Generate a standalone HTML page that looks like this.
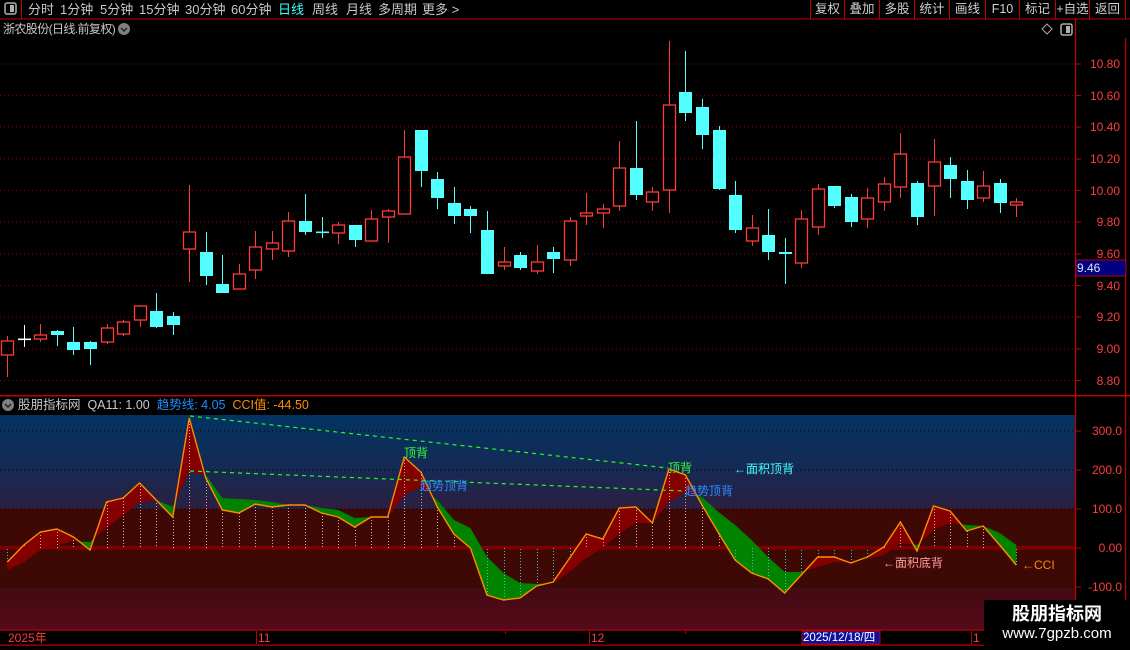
<!DOCTYPE html>
<html><head><meta charset="utf-8"><style>
*{margin:0;padding:0;box-sizing:border-box}
body{width:1130px;height:650px;background:#000;overflow:hidden;position:relative;font-family:"Liberation Sans","Noto Sans CJK SC",sans-serif;color:#c8c8c8}
.t{position:absolute;white-space:nowrap;font-size:13px;line-height:16px}
.bt{position:absolute;top:0;height:19px;border-left:1px solid #c00000;font-size:12.5px;line-height:19px;text-align:center;color:#d0d0d0;white-space:nowrap;overflow:hidden}
svg{position:absolute;left:0;top:0}
</style></head><body>
<svg width="1130" height="650" id="s">
<defs>
<linearGradient id="gb" x1="0" y1="0" x2="0" y2="1"><stop offset="0" stop-color="#033363"/><stop offset="0.55" stop-color="#152a55"/><stop offset="1" stop-color="#2c1f40"/></linearGradient>
<linearGradient id="gr" x1="0" y1="0" x2="0" y2="1"><stop offset="0" stop-color="#430a12"/><stop offset="1" stop-color="#540a1a"/></linearGradient>
</defs>
<rect x="0" y="18.5" width="1130" height="1" fill="#c00000"/>
<rect x="21" y="0" width="1" height="19" fill="#c00000"/>
<rect x="5" y="3" width="11" height="11" rx="2" fill="none" stroke="#b0b0b0" stroke-width="1.5"/><rect x="10" y="5" width="4" height="7" fill="#b0b0b0"/>
<rect x="1075" y="19" width="1.2" height="626" fill="#c00000"/>
<rect x="1125" y="38" width="1.2" height="592" fill="#c00000"/>
<rect x="0" y="395" width="1130" height="1.5" fill="#c00000"/>
<rect x="0" y="415" width="1075" height="94" fill="url(#gb)"/>
<rect x="0" y="509" width="1075" height="78" fill="#3e0904"/>
<rect x="0" y="546" width="1075" height="3.5" fill="#800000"/>
<rect x="0" y="587" width="1075" height="43" fill="url(#gr)"/>
<g id="grid" stroke="#8a0000" stroke-width="1" stroke-dasharray="1 3"></g>
<g id="ind"></g>
<g id="cd"></g>
<rect x="0" y="629.5" width="1130" height="1.2" fill="#c00000"/>
<rect x="0" y="644.5" width="1130" height="1.2" fill="#c00000"/>
<rect x="256" y="631" width="1" height="13" fill="#c00000"/>
<rect x="589" y="631" width="1" height="13" fill="#c00000"/>
<rect x="971" y="631" width="1" height="13" fill="#c00000"/>
<rect x="505" y="631" width="1" height="3" fill="#c00000"/>
<rect x="685" y="631" width="1" height="3" fill="#c00000"/>
<rect x="802" y="631" width="78" height="13" fill="#1010a0" stroke="#c00000" stroke-width="1"/>
<circle cx="124" cy="29" r="6" fill="#808080"/><path d="M121 28 L124 31 L127 28" stroke="#222" stroke-width="1.5" fill="none"/>
<circle cx="8" cy="405" r="6" fill="#808080"/><path d="M5 404 L8 407 L11 404" stroke="#222" stroke-width="1.5" fill="none"/>
<path d="M1047 24 L1052 29 L1047 34 L1042 29 Z" fill="none" stroke="#aaa"/>
<rect x="1061" y="24" width="11" height="11" rx="2" fill="none" stroke="#b0b0b0" stroke-width="1.5"/><rect x="1066" y="26" width="4" height="7" fill="#b0b0b0"/>
<rect x="1076" y="260" width="50" height="16" fill="#000080" stroke="#c00000"/>
</svg>

<div class="t" style="left:28px;top:2px">分时</div>
<div class="t" style="left:60px;top:2px">1分钟</div>
<div class="t" style="left:100px;top:2px">5分钟</div>
<div class="t" style="left:139px;top:2px">15分钟</div>
<div class="t" style="left:185px;top:2px">30分钟</div>
<div class="t" style="left:231px;top:2px">60分钟</div>
<div class="t" style="left:278px;top:2px;color:#40ffff">日线</div>
<div class="t" style="left:312px;top:2px">周线</div>
<div class="t" style="left:346px;top:2px">月线</div>
<div class="t" style="left:378px;top:2px">多周期</div>
<div class="t" style="left:422px;top:2px">更多 &gt;</div>
<div class="bt" style="left:810px;width:34px">复权</div>
<div class="bt" style="left:844px;width:35px">叠加</div>
<div class="bt" style="left:879px;width:35px">多股</div>
<div class="bt" style="left:914px;width:35px">统计</div>
<div class="bt" style="left:949px;width:36px">画线</div>
<div class="bt" style="left:985px;width:34px">F10</div>
<div class="bt" style="left:1019px;width:36px">标记</div>
<div class="bt" style="left:1055px;width:34px">+自选</div>
<div class="bt" style="left:1089px;width:37px;border-right:1px solid #c00000">返回</div>

<div class="t" style="left:3px;top:21px;font-size:12px;letter-spacing:-0.6px">浙农股份(日线.前复权)</div>
<div class="t" style="left:18px;top:397px;font-size:12.5px">股朋指标网&nbsp; QA11: 1.00 &nbsp;<span style="color:#1e8cff">趋势线: 4.05</span>&nbsp; <span style="color:#ff8c00">CCI值: -44.50</span></div>

<div class="t" style="left:1077px;top:260px;color:#e0e0ff;font-size:12px">9.46</div>

<div class="t" style="left:404px;top:445px;color:#30ff30;font-size:12px">顶背</div>
<div class="t" style="left:420px;top:478px;color:#2a8cff;font-size:12px">趋势顶背</div>
<div class="t" style="left:668px;top:460px;color:#30ff30;font-size:12px">顶背</div>
<div class="t" style="left:685px;top:483px;color:#2a8cff;font-size:12px">趋势顶背</div>
<div class="t" style="left:734px;top:461px;color:#40ffff;font-size:12px">←面积顶背</div>
<div class="t" style="left:883px;top:555px;color:#ff9c9c;font-size:12px">←面积底背</div>
<div class="t" style="left:1022px;top:557px;color:#ff8c00;font-size:12px">←CCI</div>

<div class="t" style="left:8px;top:630px;color:#ff3c3c;font-size:12px">2025年</div>
<div class="t" style="left:258px;top:630px;color:#ff3c3c;font-size:12px">11</div>
<div class="t" style="left:591px;top:630px;color:#ff3c3c;font-size:12px">12</div>
<div class="t" style="left:803px;top:630px;color:#fff;font-size:11.5px">2025/12/18/四</div>
<div class="t" style="left:973px;top:630px;color:#ff3c3c;font-size:12px">1</div>

<div style="position:absolute;left:984px;top:600px;width:146px;height:50px;background:#000">
<div style="position:absolute;left:0;width:146px;top:2px;text-align:center;color:#fff;font-size:18px;font-weight:bold;line-height:24px">股朋指标网</div>
<div style="position:absolute;left:0;width:146px;top:24px;text-align:center;color:#fff;font-size:15px;line-height:20px">www.7gpzb.com</div>
</div>

<div id="lbl"></div>
<script>
var NS="http://www.w3.org/2000/svg";
function el(p,tag,a){var e=document.createElementNS(NS,tag);for(var k in a)e.setAttribute(k,a[k]);p.appendChild(e);return e;}
var grid=document.getElementById('grid'),ind=document.getElementById('ind'),cd=document.getElementById('cd'),lbl=document.getElementById('lbl');
var pl=[["10.80",64],["10.60",95.5],["10.40",127],["10.20",159],["10.00",190.5],["9.80",222],["9.60",254],["9.40",285.5],["9.20",317],["9.00",349],["8.80",380.5]];
var h='';
pl.forEach(function(p){el(grid,'line',{x1:0,y1:p[1],x2:1075,y2:p[1]});el(document.getElementById('s'),'rect',{x:1076,y:p[1]-0.5,width:5,height:1,fill:'#c00000'});
h+='<div class="t" style="left:1080px;width:40px;text-align:right;top:'+(p[1]-8)+'px;color:#ff3c3c;font-size:12px">'+p[0]+'</div>';});
var il=[["300.0",431],["200.0",470],["100.0",509],["0.00",548],["-100.0",587]];
il.forEach(function(p){if(p[1]!=548)el(grid,'line',{x1:0,y1:p[1],x2:1075,y2:p[1],stroke:'#000'});el(document.getElementById('s'),'rect',{x:1076,y:p[1]-0.5,width:5,height:1,fill:'#c00000'});
h+='<div class="t" style="left:1078px;width:44px;text-align:right;top:'+(p[1]-8)+'px;color:#ff3c3c;font-size:12px">'+p[0]+'</div>';});
lbl.innerHTML=h;
var X=function(i){return 7.3+16.54*i;};
var C=[['r',336,341,355,377],['w',325,339,340,347],['r',324,335,339,342],['c',330,331,335,346],['c',327,342,350,355],['c',341,342,349,365],['r',324,328,342,344],['r',320,322,334,336],['r',305,306,320,327],['c',293,311,327,328],['c',312,316,325,335],['r',185,232,249,282],['c',232,252,276,285],['c',255,284,293,293],['r',264,274,289,289],['r',231,247,270,279],['r',231,243,249,260],['r',212,221,251,257],['c',194,221,232,235],['c',217,232,233,238],['r',222,225,233,244],['c',225,225,240,247],['r',210,219,241,241],['r',209,211,217,243],['r',130,157,214,214],['c',130,130,171,187],['c',172,179,198,209],['c',187,203,216,224],['c',206,209,216,233],['c',211,230,274,274],['r',247,262,266,270],['c',252,255,268,270],['r',245,262,271,274],['c',247,252,259,273],['r',217,221,260,266],['r',193,213,216,225],['r',204,209,213,228],['r',141,168,206,211],['c',121,168,195,200],['r',187,192,202,211],['r',41,105,190,213],['c',51,92,113,121],['c',99,107,135,149],['c',126,130,189,190],['c',181,195,230,233],['r',215,228,241,246],['c',209,235,252,260],['c',238,252,254,284],['r',210,219,263,268],['r',184,189,227,235],['c',186,186,206,208],['c',194,197,222,227],['r',188,198,219,228],['r',177,184,202,211],['r',133,154,187,198],['c',181,183,217,225],['r',139,162,186,216],['c',157,165,179,198],['c',170,181,200,209],['r',171,186,198,202],['c',179,183,203,213],['r',198,202,205,217]];
C.forEach(function(c,i){var x=Math.round(X(i))+0.5;var col=c[0]=='r'?'#ff3a3a':(c[0]=='c'?'#54ffff':'#ffffff');
el(cd,'line',{x1:x,y1:c[1],x2:x,y2:c[2],stroke:col,'stroke-width':1});
el(cd,'line',{x1:x,y1:c[3],x2:x,y2:c[4],stroke:col,'stroke-width':1});
var hgt=Math.max(c[3]-c[2],1);
if(c[0]=='r')el(cd,'rect',{x:x-6,y:c[2],width:12,height:hgt,fill:'none',stroke:col,'stroke-width':1.3});
else if(hgt<=1.5)el(cd,'rect',{x:x-6.5,y:c[2]-0.5,width:13,height:1.6,fill:col});
else el(cd,'rect',{x:x-6.5,y:c[2],width:13,height:hgt,fill:col});});
var cc=[562,545,532,529,537,550,502,498,483,500,517,418,478,510,513,504,507,505,505,513,517,527,517,517,457,472,507,534,548,595,600,598,586,582,558,534,539,508,507,523,469,475,505,533,560,573,579,593,575,557,557,563,557,547,522,551,506,511,531,526,545,565];
var s=[570,562,550,545,541,542,528,515,502,500,507,472,475,498,499,500,502,505,505,508,510,518,517,517,495,487,500,520,528,557,573,583,584,583,572,558,548,534,523,523,502,492,497,512,525,540,557,572,572,567,562,562,558,555,543,545,530,523,525,526,533,545];
function poly(pts,col){el(ind,'polygon',{points:pts.map(function(p){return p[0]+','+p[1]}).join(' '),fill:col});}
for(var i=0;i<61;i++){var x0=X(i),x1=X(i+1),d0=s[i]-cc[i],d1=s[i+1]-cc[i+1];
var c0=d0>=0?'#840000':'#008400',c1=d1>=0?'#840000':'#008400';
if((d0>=0)==(d1>=0)){poly([[x0,cc[i]],[x1,cc[i+1]],[x1,s[i+1]],[x0,s[i]]],c0);}
else{var t=d0/(d0-d1),px=x0+t*(x1-x0),py=cc[i]+t*(cc[i+1]-cc[i]);poly([[x0,cc[i]],[px,py],[x0,s[i]]],c0);poly([[px,py],[x1,cc[i+1]],[x1,s[i+1]]],c1);}}
for(var i=0;i<62;i++){var x=Math.round(X(i))+0.5;el(ind,'line',{x1:x,y1:cc[i],x2:x,y2:548,stroke:cc[i]<548?'#ff9a9a':'#30c8c8','stroke-width':1,'stroke-dasharray':'1 2'});}
el(ind,'polyline',{points:cc.map(function(v,i){return X(i)+','+v}).join(' '),fill:'none',stroke:'#ff8c00','stroke-width':1.4});
el(ind,'line',{x1:190,y1:416,x2:668,y2:468,stroke:'#20ff20','stroke-width':1.2,'stroke-dasharray':'4 4'});
el(ind,'line',{x1:190,y1:471,x2:685,y2:491,stroke:'#20ff20','stroke-width':1.2,'stroke-dasharray':'4 4'});
</script>
</body></html>
